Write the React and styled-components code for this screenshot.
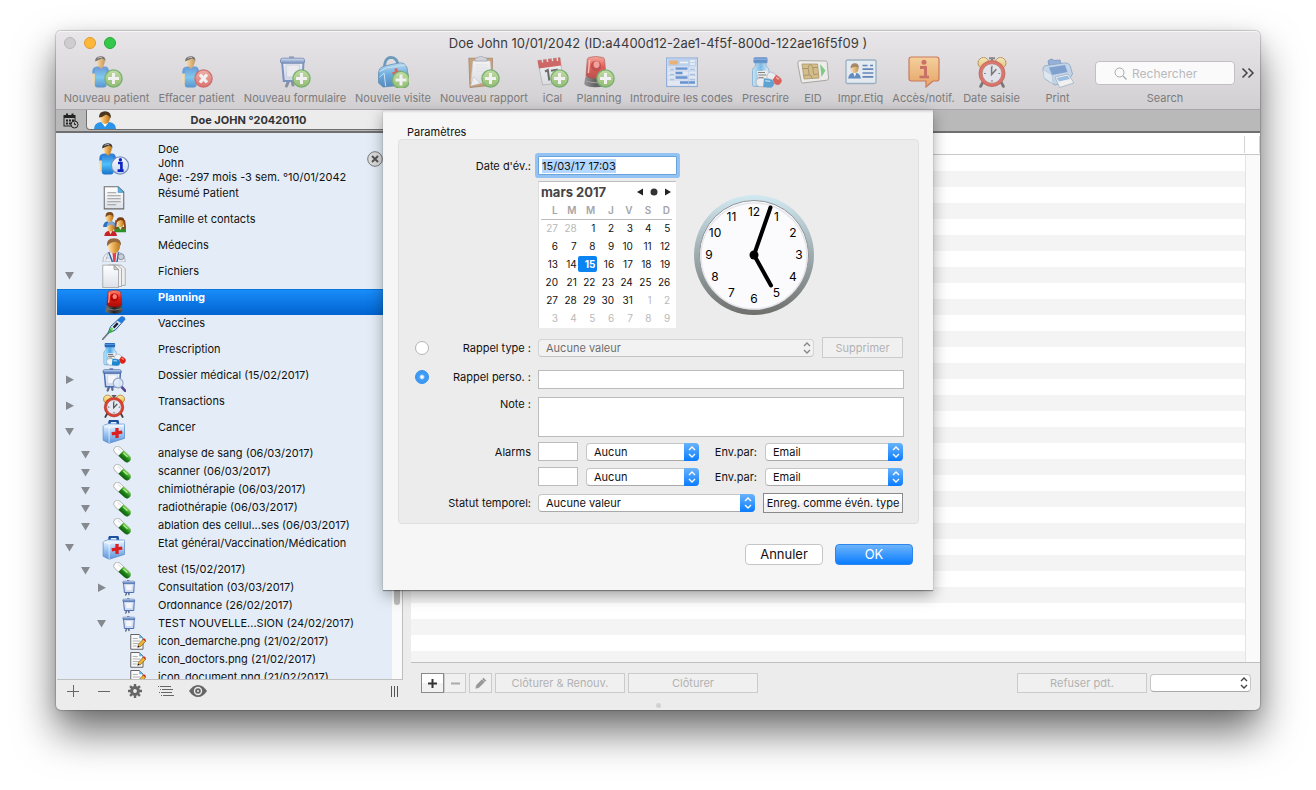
import React, { useEffect, useRef } from 'react';
import styled, { createGlobalStyle, css } from 'styled-components';

const GlobalStyle = createGlobalStyle`
  *, *::before, *::after { box-sizing: border-box; }
  body { margin: 0; background: #fff; overflow: hidden; }
  body, button, input, select, textarea { font-family: Inter, "Liberation Sans", sans-serif; font-size: 11px; color: #111; }
  button, input, select, textarea { margin: 0; padding: 0; border-radius: 0; outline: none; }
  button { background: none; border: 0; }
  ul { list-style: none; margin: 0; padding: 0; }
  svg { display: block; flex: none; }
`;

/* ---------- icon artwork ---------- */

const Defs = styled.svg`position: absolute; width: 0; height: 0;`;

function lin(id, stops, horizontal) {
  return (
    <linearGradient key={id} id={id} x1="0" y1="0" x2={horizontal ? 1 : 0} y2={horizontal ? 0 : 1}>
      {stops.map((c, i) => <stop key={i} offset={i / (stops.length - 1)} stopColor={c} />)}
    </linearGradient>
  );
}

const Gradients = () => (
  <Defs aria-hidden="true">
    <defs>
      {lin('shirt', ['#2f7ad6', '#4fc0fa', '#1671c9'])}
      {lin('skin', ['#ffe3b0', '#e8a94e', '#b8761f'], true)}
      {lin('frame', ['#dfe9fa', '#7f9fd2', '#4a6cae'])}
      {lin('paper', ['#ffffff', '#dde1e8'])}
      {lin('red', ['#ff8a78', '#e01b10', '#a50d08'])}
      {lin('dark', ['#777', '#222', '#555'], true)}
      {lin('blue', ['#a8dcfb', '#2f93e0', '#1560ae'])}
      {lin('glass', ['#c7ecff', '#4aa8e8', '#e8f7ff'], true)}
      {lin('kit', ['#f4faff', '#9fc6f2', '#5b93da'])}
      {lin('orange', ['#ffc878', '#ef8a2c'])}
      {lin('gold', ['#fff0b0', '#e2b23e'])}
      {lin('green', ['#7fd053', '#1f8a1a', '#0c5c0c'])}
      {lin('rim', ['#d2e9f1', '#9eabaf', '#6f6f6c'])}
      {lin('add', ['#b6dd88', '#6fae3c'])}
      {lin('del', ['#f59a8e', '#dd3f38'])}
      {lin('board', ['#fafcff', '#c9d6ec'])}
    </defs>
  </Defs>
);

const Svg = ({ size = 32, box = 32, children }) => (
  <svg width={size} height={size} viewBox={`0 0 ${box} ${box}`} aria-hidden="true">{children}</svg>
);

const AddBadge = ({ cx = 22.5, cy = 22.5 }) => (
  <g>
    <circle cx={cx} cy={cy} r="8.6" fill="url(#add)" stroke="#3f9a3a" strokeWidth="1.3" />
    <path d={`M${cx - 5.5} ${cy}h11M${cx} ${cy - 5.5}v11`} stroke="#fff" strokeWidth="3" />
  </g>
);
const DelBadge = () => (
  <g>
    <circle cx="22.5" cy="22.5" r="8.6" fill="url(#del)" stroke="#c83432" strokeWidth="1.3" />
    <path d="M19 18.500l7 8M26 18.500l-7 8" stroke="#fff" strokeWidth="3.4" />
  </g>
);
const InfoBadge = () => (
  <g>
    <circle cx="22" cy="22.5" r="8.6" fill="url(#board)" stroke="#7a93bd" strokeWidth="1.3" />
    <path d="M20 20h3.4v7M19.6 27.6h6" stroke="#0b22c4" strokeWidth="2.6" fill="none" />
    <circle cx="22.4" cy="16.8" r="1.7" fill="#0b22c4" />
  </g>
);

const Person = () => (
  <g>
    <path d="M1.500 14Q2 10.500 7 10.500h7Q18 10.500 18 16v4H1z" fill="#2a7fd8" />
    <path d="M1 17.500h3V29H3q-1.600 0-1.600-3zM15 17h3v10h-3z" fill="url(#skin)" />
    <path d="M4 11h11l.8 18q-1 2.500-3 2.500H6.500Q4 31.500 3.800 29z" fill="url(#shirt)" />
    <path d="M7 10.200l3 2.600 3-2.600-1-2H8z" fill="#d5933f" />
    <ellipse cx="9.500" cy="5.600" rx="4.300" ry="5.200" fill="url(#skin)" />
    <path d="M4.200 5.500Q3.800.6 9.500.3q5.600 0 4.800 5.200-.8-2.600-3-3-3 .8-7.100 3z" fill="#3e3a36" />
    <path d="M6.500 2.400q2-1.400 4.500-.8" stroke="#bbb" strokeWidth=".9" fill="none" />
  </g>
);
const Board = () => (
  <g>
    <path d="M10 1.500h5" stroke="#6d84ad" strokeWidth="2.400" />
    <path d="M10 24l-2.500 6M13 24l1 5" stroke="#5c6a86" strokeWidth="3" strokeLinecap="round" />
    <path d="M3 5h21.500l-1 20H4.800z" fill="url(#board)" stroke="#4a6db3" strokeWidth="2" />
    <path d="M7 9h13.500l-.6 12H7.700z" fill="#f3f5fa" stroke="#b7c6e2" strokeWidth=".8" />
    <path d="M1.500 4.200q0-2 2-2h20q2 0 2 2v1.600q0 1.500-2 1.500h-20q-2 0-2-1.500z" fill="url(#frame)" stroke="#4262a4" strokeWidth=".9" />
  </g>
);
const Bag = () => (
  <g>
    <path d="M7.500 13Q7 2 14 1.400 20.500 1.600 21.500 11" fill="none" stroke="#3177a8" strokeWidth="2.600" />
    <path d="M1.500 17Q2 11 8 9.800L22 7q6-1 8 5l1.500 9-4.500 8L6 31 1.500 27z" fill="url(#blue)" stroke="#2768a5" strokeWidth=".8" />
    <path d="M2.500 15.500l7-3.500 19-3M2.600 21l4.500-4 1.500 13" fill="none" stroke="#bfe6fb" strokeWidth="1" />
    <path d="M15.500 17.600l8-1.600M18.900 12.500l1.300 7.600" stroke="#e2231a" strokeWidth="3" />
  </g>
);
const Clipboard = () => (
  <g>
    <path d="M.8 2.200h23.700l-.5 27L2 31.500z" fill="#b98350" stroke="#8b5a2b" strokeWidth=".8" />
    <path d="M5 5h17l2 19-5 3.500L3 26z" fill="url(#paper)" stroke="#c2c7d0" strokeWidth=".6" />
    <path d="M2.500 30l3-9.500 7 7z" fill="#f8f9fb" stroke="#aab" strokeWidth=".5" />
    <path d="M7 3.500q0-2 3-2 1-1.300 3-1.300t2.800 1.300q3.200 0 3.200 2V5H7z" fill="#c9ced8" stroke="#7f8794" strokeWidth=".7" />
    <path d="M7.500 9h12M7.500 12h12M7.500 15h10" stroke="#e3e6ec" strokeWidth="1" />
  </g>
);
const Calendar = () => (
  <g>
    <path d="M.8 4.500L23 1.500l3.500 25L5.500 29z" fill="url(#paper)" stroke="#9d9d9d" strokeWidth=".8" />
    <path d="M.6 4.600L23 1.400l1.200 8L2 12.500z" fill="#c62a27" />
    <path d="M5 1.500l.6 5M10 .8l.6 5M15 .2l.6 5M20 0l.5 5" stroke="#dedede" strokeWidth="1.500" />
    <path d="M8 15.500l2.800-1.500 1.500 10.500M14 14.800l5.500-1-3 9.500" stroke="#333" strokeWidth="2" fill="none" />
  </g>
);
const Siren = () => (
  <g>
    <path d="M2.500 20.500h20.500l1 7q-1 3.800-11.500 3.800T1.200 27.500z" fill="url(#dark)" />
    <path d="M3.200 25q9.500 3.500 19.600 0" stroke="#8a8a8a" strokeWidth="1" fill="none" />
    <path d="M5.800 1.500Q12.600-.6 20 1.500q1.500.6 1.600 2.500l1.400 16q-4 2.500-10 2.500t-10-2.500L4.200 4q.2-2 1.600-2.500z" fill="url(#red)" stroke="#8c0f0a" strokeWidth=".6" />
    <circle cx="13" cy="10" r="5.200" fill="#b10a07" />
    <ellipse cx="13.500" cy="8.600" rx="3" ry="3.400" fill="#ff8276" />
    <path d="M6.600 4l-1.200 13" stroke="#ffb0a5" strokeWidth="1.500" />
  </g>
);
const CenteredSiren = () => <g transform="translate(3.500 0)"><Siren /></g>;
const Grid = () => (
  <g>
    <rect x=".6" y="2" width="30.800" height="28.500" fill="#e6f0fd" stroke="#6e9ad8" strokeWidth="1.200" />
    <rect x="1.500" y="3" width="29" height="7" fill="#a9cbf6" />
    <rect x="3.500" y="4.500" width="8.500" height="4" fill="#f09a3a" />
    <path d="M14 6.500h8M24 5h5M24 8h5" stroke="#fff" strokeWidth="1.600" />
    <path d="M4 13.500h4M4 18.500h4M4 23.500h4M24 13.500h5M24 18.500h5M24 23.500h5" stroke="#8eb4ea" strokeWidth="1.600" />
    <path d="M9.500 12.500h12M9.500 17h7M9.500 21.500h12M14 26.500h15" stroke="#2d70cc" strokeWidth="2.400" />
    <path d="M2 11h28M2 15h28M2 19.500h28M2 24h28M22.700 3v27" stroke="#a6c5ee" strokeWidth=".7" />
  </g>
);
const Bottle = () => (
  <g>
    <rect x="3.500" y="1.200" width="14" height="6" rx="1.500" fill="#2468bd" />
    <path d="M4 3.200h13" stroke="#6aa8ea" strokeWidth="1" />
    <path d="M5.500 7h10.500v3q3 2 3 4.500V29q0 1.500-2 1.500H4.500q-2 0-2-1.500V14.500Q2.500 12 5.500 10z" fill="url(#glass)" stroke="#3c8ccc" strokeWidth=".7" />
    <path d="M7 15l10-.5 2.500 8L8 23z" fill="#f4f6f8" />
    <path d="M8 16.500h7M8.300 19h8M8.500 21.500h5" stroke="#555" strokeWidth="1.200" />
    <g transform="rotate(35 25 23)">
      <rect x="16" y="19" width="16" height="8" rx="4" fill="#f3f6f9" stroke="#98a3af" strokeWidth=".7" />
      <path d="M23.500 19h4.500a4 4 0 010 8h-4.500z" fill="#dd2318" />
      <path d="M25 21h3.500" stroke="#ff9d92" strokeWidth="1.300" />
    </g>
    <g transform="rotate(6 14 27)">
      <rect x="6" y="22.500" width="18" height="8.500" rx="4.200" fill="#f3f6f9" stroke="#98a3af" strokeWidth=".7" />
      <path d="M13.500 22.500h6.300a4.200 4.200 0 010 8.500h-6.300z" fill="#1d86cf" />
      <path d="M15 24.700h5" stroke="#a8dcfb" strokeWidth="1.400" />
    </g>
  </g>
);
const ChipCard = () => (
  <g>
    <path d="M1 6.500q0-2 2-1.900L28.500 5q1.500 0 1.700 1.600L31.500 22q.2 2-1.600 2.200L6 27q-1.600.2-1.800-1.500L.8 8z" fill="#f7f6f2" stroke="#8c8c84" strokeWidth="1" />
    <path d="M5 8h15.500l1.500 14L7 23z" fill="#d0ae5c" stroke="#8e7431" strokeWidth=".8" />
    <path d="M5.500 12.500h5.700l1 6.500-5.700.4M20.800 11.500h-5l.9 7 5-.5M11.200 12.500Q11 9 13.500 8.200M12.200 19q2.500 0 3 3.500M15.800 11.500l-2.300-3.300" fill="none" stroke="#7b6429" strokeWidth=".8" />
    <path d="M23 8l5.500 6.500L24.500 21z" fill="#4fc05a" />
  </g>
);
const IdCard = () => (
  <g>
    <rect x="1" y="4" width="30" height="23.500" rx="1.500" fill="#e7f3fb" stroke="#7899b4" strokeWidth="1.300" />
    <path d="M3 22.500Q4 16.500 9.500 16.500t6.500 6z" fill="#2263b5" />
    <path d="M8 16.500h3.500l-1.700 4.500z" fill="#fff" />
    <ellipse cx="9.600" cy="12.500" rx="3.900" ry="4.600" fill="url(#skin)" />
    <path d="M5.500 12.500q0-5.300 4.500-5.300 4 0 3.800 4.600-4.300-2.400-8.300.7z" fill="#8a5a28" />
    <path d="M17.500 9.500h5M25 9.500h3M17.500 13.200h10.800M17.500 17h10.800M17.500 20.800h10.800" stroke="#2358a8" strokeWidth="1.700" />
  </g>
);
const Notice = () => (
  <g>
    <path d="M3.500 1h25Q31 1 31 3.500v19q0 2.500-2.500 2.500H25l-7 6v-6H3.500Q1 25 1 22.500v-19Q1 1 3.500 1z" fill="url(#orange)" stroke="#c4461b" strokeWidth="1.200" />
    <circle cx="16" cy="6.300" r="2.500" fill="#bf3a28" />
    <path d="M12 11.500h5.500V21" fill="none" stroke="#bf3a28" strokeWidth="3" />
    <path d="M11.500 21h9.500" stroke="#bf3a28" strokeWidth="2.600" />
  </g>
);
const Alarm = () => (
  <g>
    <circle cx="7.500" cy="7" r="5.500" fill="url(#gold)" stroke="#a8741b" />
    <circle cx="24.500" cy="7" r="5.500" fill="url(#gold)" stroke="#a8741b" />
    <path d="M13 2.200h6M16 2v3" stroke="#555" strokeWidth="2" />
    <path d="M7 26l-2.500 4.500M25 26l2.500 4.500" stroke="#444" strokeWidth="2.600" strokeLinecap="round" />
    <circle cx="16" cy="17.500" r="13" fill="#e0402e" stroke="#9b1c12" strokeWidth=".7" />
    <circle cx="16" cy="17.500" r="9.800" fill="#e5e9f3" stroke="#a34a42" strokeWidth=".8" />
    <path d="M16 9.500v1.800M16 24v1.800M8 17.500h1.800M22.400 17.500h1.800" stroke="#555" strokeWidth="1.200" />
    <path d="M15.600 11v7.500l4.800-5.300" stroke="#444" strokeWidth="1.500" fill="none" />
  </g>
);
const Printer = () => (
  <g>
    <path d="M6 5q3.500-3.500 6-.5l6-.5 2.500 8.500L8 14z" fill="#6d9ad6" stroke="#3c669e" strokeWidth=".7" />
    <path d="M1 14.500Q.5 9.500 4.500 9.500l18-2.500q5-.5 6 4l2 7-4.500 7-13 4-10-6z" fill="#b7d2ee" stroke="#5985b6" strokeWidth=".8" />
    <path d="M7 11.500l16-2.500 2.500 7L10 19z" fill="#4e83c8" />
    <path d="M1 13.500l9 5.500 1 9-9-6z" fill="#e1eef9" stroke="#8fb0d0" strokeWidth=".5" />
    <path d="M13 21l13-3 6 9-14.500 4.500z" fill="#fdfeff" stroke="#7f9dbd" strokeWidth=".8" />
    <path d="M14.500 22l11-2.600 2.500 3.600-11 2.600z" fill="#7bb1e8" />
  </g>
);
const Sheet = () => (
  <g>
    <path d="M3 1h18.500L29 8v22.500H3z" fill="url(#paper)" stroke="#6b6b6b" strokeWidth="1.400" />
    <path d="M21.500 1v7.500H29z" fill="#5bb4e8" stroke="#3a7fb0" strokeWidth=".8" />
    <path d="M7 9h12M7 13h18M7 17h18M7 21h18M7 25h12" stroke="#999" strokeWidth="1.500" />
  </g>
);
const Bust = ({ x, y, s = 1, hair = '#7c4a1c', coat = '#2b6fc0' }) => (
  <g transform={`translate(${x} ${y}) scale(${s})`}>
    <path d="M0 20Q0 12 8.500 12T17 20z" fill={coat} />
    <path d="M6 12h5l-2.500 5z" fill="#f2dcc0" />
    <ellipse cx="8.500" cy="7" rx="5" ry="6" fill="url(#skin)" />
    <path d="M3.300 7Q2.500 0 8.800 0q6 0 5 7-1.500-3.500-4.500-3.500-3.500 0-6 3.500z" fill={hair} />
  </g>
);
const Family = () => (
  <g>
    <Bust x={1.5} y={0} />
    <Bust x={16} y={7} hair="#7a3d12" coat="#2e8f2b" />
    <path d="M19 11l-1.500 11 4-1M29.500 11l1.500 10-4 1" fill="none" stroke="#8e4a18" strokeWidth="2.500" />
    <Bust x={3} y={13} hair="#86a5cf" coat="#c8212a" />
  </g>
);
const Doctor = () => (
  <g>
    <path d="M1 32Q1 18 16 18t15 14z" fill="#eceff4" stroke="#9ba4b2" strokeWidth=".9" />
    <path d="M9 19l5 13M22 19l-2 13" stroke="#3166ae" strokeWidth="2" />
    <path d="M14 20h5l-1 12h-3z" fill="#e2404a" />
    <ellipse cx="16" cy="11" rx="8" ry="9.500" fill="url(#skin)" />
    <path d="M7 11Q5 .3 16 .3q10.500 0 9 10.200Q23 5.500 17.500 5 11 5.500 7 11z" fill="#96683b" />
    <circle cx="25.500" cy="25" r="4" fill="#c8ced7" stroke="#727b88" />
    <path d="M5 26l5 1M8 21l-3 9" stroke="#a9b1bd" />
  </g>
);
const Files = () => (
  <g stroke="#8f8f8f" strokeWidth=".9">
    <path d="M13 1.500h13l5 5v22H13z" fill="#ededed" />
    <path d="M8 1.500h13l5 5v23.500H8z" fill="#f1f1f1" />
    <path d="M1 1.500h15l6 6V31.500H1z" fill="url(#paper)" />
    <path d="M16 1.500v6h6z" fill="#cfcfcf" />
  </g>
);
const Thermometer = () => (
  <g>
    <path d="M1 31l9-10" stroke="#6e7682" strokeWidth="2.400" strokeLinecap="round" />
    <path d="M8 23l3.500-9L25 1.500q5-1.500 5.500 3L18 18.500z" fill="#d8eaf7" stroke="#1c5796" strokeWidth="1.300" />
    <path d="M20 6l5-4.500q5-1.500 5.500 3l-4.500 5z" fill="#1d7be0" />
    <path d="M10.500 16.500l5 4.500-7.500 2z" fill="#3eb23c" />
    <path d="M15.500 15.500l5.500-6" stroke="#223" strokeWidth="3" />
    <path d="M12 18l2-2" stroke="#64e052" strokeWidth="3" />
  </g>
);
const BoardSearch = () => (
  <g>
    <Board />
    <path d="M26 25l5 5.500" stroke="#5a4793" strokeWidth="3.600" strokeLinecap="round" />
    <circle cx="21.500" cy="20" r="6.500" fill="#e0ecfb" fillOpacity=".9" stroke="#91a4c4" strokeWidth="1.500" />
  </g>
);
const MedKit = () => (
  <g>
    <path d="M10 7V3q0-2 2-2h7q2 0 2 2v3" fill="none" stroke="#1d50a0" strokeWidth="3.400" />
    <path d="M1.500 7.500L8 5l22 .5v19L9.500 31 1.500 27z" fill="url(#kit)" stroke="#5a8dcc" strokeWidth="1" />
    <path d="M9.500 10l20.500-3.500M9.500 10v21M9.500 10L1.500 7.500" stroke="#fff" strokeWidth=".9" fill="none" />
    <path d="M13 18.500l14-2.500M20 10.500v13.500" stroke="#dc1f1f" strokeWidth="4.400" />
  </g>
);
const Pill = () => (
  <g transform="rotate(42 16 15)">
    <rect x="-2" y="8" width="36" height="13" rx="6.500" fill="#fdfdfd" stroke="#8b8b8b" />
    <path d="M13 8h14.500a6.500 6.500 0 010 13H13z" fill="url(#green)" />
    <path d="M3 12h8" stroke="#cfcfcf" strokeWidth="1.400" /><path d="M16 11.500h10" stroke="#b8ef95" strokeWidth="2" />
  </g>
);
const EditSheet = () => (
  <g>
    <path d="M1.500 1h17L26 8v22.500H1.500z" fill="#fafafa" stroke="#555" strokeWidth="1.800" />
    <path d="M18.500 1v7.500H26z" fill="#5bb4e8" />
    <path d="M5.500 9h10M5.500 14h15M5.500 19h12M5.500 24h8" stroke="#aaa" strokeWidth="1.800" />
    <path d="M15.500 26.500l1.500-6L26.500 10l5 4.500-10 10.500z" fill="#efb32f" stroke="#4f3510" strokeWidth="1" />
    <path d="M26 10.500l2.200-2 4 3.500-2 2.500z" fill="#d52a20" />
    <path d="M15 27l1.500-3.500 2.500 2z" fill="#000" />
  </g>
);

/* ---------- window chrome ---------- */

const Page = styled.div`
  display: grid;
  height: 100vh;
  padding: 31px 56px 80px;
`;
const Window = styled.main`
  position: relative;
  display: flex;
  flex-direction: column;
  min-height: 0;
  border-radius: 5px;
  background: #ececec;
  box-shadow: 0 0 1px 1px rgba(0, 0, 0, 0.18), 0 22px 40px rgba(0, 0, 0, 0.56), 0 4px 16px rgba(0, 0, 0, 0.1);
`;
const Header = styled.header`
  height: 79px;
  flex: none;
  border-radius: 5px 5px 0 0;
  border-top: 1px solid #f6f5f6;
  border-bottom: 1px solid #a9a7a9;
  background: linear-gradient(#e8e6e8, #d1cfd1);
`;
const TitleRow = styled.div`
  display: grid;
  grid-template-columns: 1fr auto 1fr;
  align-items: center;
  height: 22px;
  padding: 0 8px;
`;
const Lights = styled.div`display: flex; gap: 8px;`;
const Light = styled.button`
  width: 12px;
  height: 12px;
  border-radius: 50%;
  border: 1px solid ${(p) => p.$edge};
  background: ${(p) => p.$fill};
`;
const WindowTitle = styled.h1`
  margin: 0;
  font-size: 13px;
  font-weight: 400;
  color: #3a3a3c;
`;
const Toolbar = styled.nav`
  display: flex;
  gap: 9px;
  padding: 2px 0 0 8px;
`;
const Tool = styled.button`
  display: flex;
  flex-direction: column;
  align-items: center;
  gap: 2px;
  width: ${(p) => p.$width}px;
  flex: none;
  color: #7c7b7d;
  white-space: nowrap;
  svg { opacity: 0.65; }
  span { line-height: 16px; }
`;
const SearchTool = styled.label`
  display: flex;
  flex-direction: column;
  align-items: center;
  width: 140px;
  color: #7c7b7d;
  span { line-height: 16px; }
`;
const SearchBox = styled.div`
  position: relative;
  height: 34px;
  width: 100%;
  padding-top: 5px;
  > svg { position: absolute; left: 19px; top: 11px; }
`;
const SearchInput = styled.input`
  width: 100%;
  height: 24px;
  padding-left: 36px;
  border: 1px solid #c2c0c2;
  border-radius: 4px;
  background: #fafafa;
  font-size: 12px;
  &::placeholder { color: #b9b9bb; opacity: 1; }
`;
const More = styled.button`
  margin-left: -3px;
  height: 34px;
`;

const TabBar = styled.div`
  display: flex;
  flex: none;
  height: 23px;
  background: #b9b9b9;
  border-bottom: 2px solid #6f6f6f;
`;
const TabIcon = styled.button`
  display: grid;
  place-items: center;
  width: 30px;
`;
const PatientTab = styled.button`
  display: grid;
  grid-template-columns: 40px 1fr 40px;
  align-items: center;
  width: 325px;
  height: 20px;
  border: solid #6f6f6f;
  border-width: 0 1px 1px;
  border-radius: 0 0 4px 4px;
  background: #ececec;
  font-weight: 700;
  color: #333;
  svg { margin-left: 6px; }
`;

const Body = styled.div`
  display: grid;
  grid-template-columns: 347px 1fr;
  column-gap: 8px;
  flex: 1;
  min-height: 0;
`;

/* ---------- sidebar ---------- */

const Sidebar = styled.aside`
  display: flex;
  flex-direction: column;
  min-height: 0;
`;
const TreeArea = styled.div`
  display: flex;
  flex: 1;
  min-height: 0;
  margin-left: 1px;
  border-right: 1px solid #bfbfbf;
  border-bottom: 1px solid #bfbfbf;
  overflow: hidden;
`;
const Tree = styled.ul`
  flex: 1;
  padding-top: 9px;
  background: #e4edf7;
`;
const ScrollTrack = styled.div`
  display: flex;
  flex-direction: column;
  width: 10px;
  padding: 8px 2px 0;
  background: #fafafa;
`;
const ScrollThumb = styled.div`
  height: 464px;
  border-radius: 3px;
  background: #bdbdbd;
`;
const TreeRow = styled.li`
  display: grid;
  grid-template-columns: 41px 60px 1fr auto;
  height: ${(p) => p.$height}px;
  white-space: nowrap;
  ${(p) => p.$active && css`
    background: linear-gradient(#1a8efb, #0063cf);
    box-shadow: inset 0 1px #0a74da;
    color: #fff;
    font-weight: 700;
  `}
`;
const Disclosure = styled.button`
  display: flex;
  align-items: center;
  height: 100%;
  padding-left: ${(p) => 8 + p.$level * 16}px;
`;
const TreeIcon = styled.div`
  padding: 1px 0 0 ${(p) => p.$inset}px;
`;
const TreeLabel = styled.span`
  line-height: ${(p) => p.$line || 16}px;
  white-space: pre-line;
`;
const CloseButton = styled.button`
  align-self: start;
  margin: 9px 9px 0 0;
`;
const SidebarFooter = styled.div`
  display: flex;
  align-items: center;
  gap: 16px;
  height: 30px;
  flex: none;
  padding: 0 1px 8px 9px;
`;
const FootButton = styled.button`
  display: grid;
  place-items: center;
  width: 15px;
  &:last-child { margin-left: auto; }
`;

const ICON_INSET = [4, 15, 24, 32];
const ICON_SIZE = [24, 18, 16, 16];

const rows = [
  { label: 'Résumé Patient', icon: Sheet },
  { label: 'Famille et contacts', icon: Family },
  { label: 'Médecins', icon: Doctor },
  { label: 'Fichiers', icon: Files, open: true },
  { label: 'Planning', icon: CenteredSiren, active: true },
  { label: 'Vaccines', icon: Thermometer },
  { label: 'Prescription', icon: Bottle },
  { label: 'Dossier médical (15/02/2017)', icon: BoardSearch, open: false },
  { label: 'Transactions', icon: Alarm, open: false },
  { label: 'Cancer', icon: MedKit, open: true },
  { label: 'analyse de sang (06/03/2017)', icon: Pill, level: 1, open: true },
  { label: 'scanner (06/03/2017)', icon: Pill, level: 1, open: true },
  { label: 'chimiothérapie (06/03/2017)', icon: Pill, level: 1, open: true },
  { label: 'radiothérapie (06/03/2017)', icon: Pill, level: 1, open: true },
  { label: 'ablation des cellul...ses (06/03/2017)', icon: Pill, level: 1, open: true },
  { label: 'Etat général/Vaccination/Médication', icon: MedKit, open: true },
  { label: 'test (15/02/2017)', icon: Pill, level: 1, open: true },
  { label: 'Consultation (03/03/2017)', icon: Board, level: 2, open: false },
  { label: 'Ordonnance (26/02/2017)', icon: Board, level: 2 },
  { label: 'TEST NOUVELLE...SION (24/02/2017)', icon: Board, level: 2, open: true },
  { label: 'icon_demarche.png (21/02/2017)', icon: EditSheet, level: 3 },
  { label: 'icon_doctors.png (21/02/2017)', icon: EditSheet, level: 3 },
  { label: 'icon_document.png (21/02/2017)', icon: EditSheet, level: 3 },
];

const Triangle = ({ open }) => (
  <Svg size={10} box={10}>
    <path d={open ? 'M0 1h9L4.500 8.500z' : 'M1 .5v8.500L9 4.800z'} fill="#868a8f" />
  </Svg>
);

function PatientTree() {
  return (
    <Sidebar>
      <TreeArea>
        <Tree>
          <TreeRow $height={43}>
            <span />
            <TreeIcon $inset={0}><Svg><Person /><InfoBadge /></Svg></TreeIcon>
            <TreeLabel $line={14}>{'Doe\nJohn\nAge: -297 mois -3 sem. °10/01/2042'}</TreeLabel>
            <CloseButton aria-label="Fermer">
              <Svg size={16} box={16}>
                <circle cx="8" cy="8" r="7.300" fill="#dcdcdc" stroke="#777" />
                <path d="M5 5l6 6M11 5l-6 6" stroke="#555" strokeWidth="2" />
              </Svg>
            </CloseButton>
          </TreeRow>
          {rows.map(({ label, icon: Art, level = 0, open, active }) => (
            <TreeRow key={label} $height={level ? 18 : 26} $active={active}>
              {open === undefined ? <span /> : (
                <Disclosure $level={level} aria-expanded={open} aria-label={label}><Triangle open={open} /></Disclosure>
              )}
              <TreeIcon $inset={ICON_INSET[level]}><Svg size={ICON_SIZE[level]}><Art /></Svg></TreeIcon>
              <TreeLabel>{label}</TreeLabel>
            </TreeRow>
          ))}
        </Tree>
        <ScrollTrack><ScrollThumb /></ScrollTrack>
      </TreeArea>
      <SidebarFooter>
        <FootButton aria-label="Ajouter"><Svg size={14} box={14}><path d="M1 7.500h12M7.500 1v12" stroke="#666" /></Svg></FootButton>
        <FootButton aria-label="Supprimer"><Svg size={14} box={14}><path d="M1 7.500h12" stroke="#666" /></Svg></FootButton>
        <FootButton aria-label="Réglages">
          <Svg size={14} box={14}>
            <circle cx="7" cy="7" r="3.400" fill="none" stroke="#666" strokeWidth="3" />
            {[0, 45, 90, 135].map((a) => <path key={a} d="M7 0v3M7 11v3" stroke="#666" strokeWidth="2.400" transform={`rotate(${a} 7 7)`} />)}
          </Svg>
        </FootButton>
        <FootButton aria-label="Liste">
          <Svg size={16} box={16}><path d="M2 3.500h11M4 6.500h11M3 9.500h11M5 12.500h11" stroke="#666" /><path d="M0 3.500h1M2 6.500h1M1 9.500h1M3 12.500h1" stroke="#666" /></Svg>
        </FootButton>
        <FootButton aria-label="Afficher">
          <svg width="18" height="12" viewBox="0 0 18 12" aria-hidden="true">
            <path d="M0 6Q4 0 9 0t9 6q-4 6-9 6T0 6z" fill="#666" />
            <circle cx="9" cy="6" r="4.200" fill="#ececec" /><circle cx="9" cy="6" r="2.800" fill="#666" /><circle cx="9" cy="6" r="1" fill="#ececec" />
          </svg>
        </FootButton>
        <FootButton aria-label="Redimensionner"><Svg size={12} box={12}><path d="M2.500 1v11M5.500 1v11M8.500 1v11" stroke="#555" /></Svg></FootButton>
      </SidebarFooter>
    </Sidebar>
  );
}

/* ---------- event list ---------- */

const Content = styled.section`
  display: flex;
  flex-direction: column;
  min-width: 0;
  padding-bottom: 7px;
`;
const ListHead = styled.div`
  display: flex;
  justify-content: flex-end;
  height: 22px;
  flex: none;
  padding: 3px 0 1px;
  background: #fff;
  border-bottom: 1px solid #c8c8c8;
  &::after { content: ''; width: 16px; border-left: 1px solid #d4d4d4; border-right: 1px solid #d4d4d4; }
`;
const Stripes = styled.div`
  flex: 1;
  display: flex;
  justify-content: flex-end;
  border-bottom: 1px solid #bfbfbf;
  background: repeating-linear-gradient(#fff 0 16px, #f4f4f4 16px 32px);
  &::after { content: ''; width: 15px; background: #fafafa; border-left: 1px solid #e4e4e4; }
`;
const ActionBar = styled.div`
  display: flex;
  align-items: center;
  gap: 3px;
  height: 40px;
  flex: none;
  padding: 0 9px 0 10px;
`;
const ButtonPair = styled.div`display: flex;`;
const FlatButton = styled.button`
  display: grid;
  place-items: center;
  width: ${(p) => p.$width}px;
  height: ${(p) => p.$height || 20}px;
  border: 1px solid ${(p) => (p.$strong ? '#8a8a8a' : '#cbcbcb')};
  background: ${(p) => (p.$strong ? 'linear-gradient(#fff 50%, #f2f2f2 50%)' : '#f0f0f0')};
  color: ${(p) => (p.$strong ? '#111' : '#b2b2b2')};
  white-space: nowrap;
`;
const Spacer = styled.div`flex: 1;`;
const ResizeDot = styled.div`
  align-self: center;
  position: absolute;
  bottom: 2px;
  width: 5px;
  height: 5px;
  border-radius: 50%;
  background: #d2d2d2;
`;

/* ---------- form controls ---------- */

const SelectShell = styled.span`
  position: relative;
  display: flex;
  width: ${(p) => p.$width}px;
  height: 18px;
  opacity: ${(p) => (p.$faded ? 0.6 : 1)};
  select {
    appearance: none;
    width: 100%;
    padding-left: 7px;
    border: 1px solid #c6c6c6;
    border-bottom-color: #a9a9a9;
    border-radius: 4px;
    background: ${(p) => (p.$faded ? '#f6f6f6' : '#fff')};
    opacity: 1;
    color: #111;
  }
`;
const SelectArrows = styled.span`
  position: absolute;
  inset: 0 0 0 auto;
  display: grid;
  place-items: center;
  width: 15px;
  border-radius: 0 4px 4px 0;
  pointer-events: none;
  background: ${(p) => (p.$plain ? 'none' : 'linear-gradient(#69b3fb, #0a7cff)')};
`;

function Select({ width, label, value = '', plain, faded, id }) {
  return (
    <SelectShell $width={width} $faded={faded}>
      <select id={id} aria-label={label} defaultValue={value} disabled={faded}><option>{value}</option></select>
      <SelectArrows $plain={plain || faded}>
        <svg width="8" height="12" viewBox="0 0 8 12" aria-hidden="true">
          <path d="M1 4l3-3 3 3M1 8l3 3 3-3" fill="none" stroke={plain || faded ? '#444' : '#fff'} strokeWidth="1.400" />
        </svg>
      </SelectArrows>
    </SelectShell>
  );
}

/* ---------- dialog ---------- */

const DialogLayer = styled.div`
  position: absolute;
  inset: 79px 0 auto;
  display: flex;
  justify-content: center;
`;
const Dialog = styled.form`
  width: 550px;
  padding: 15px 14px 25px 15px;
  background: #f6f6f6;
  box-shadow: 0 1px 1px rgba(0, 0, 0, 0.35), 0 5px 14px rgba(0, 0, 0, 0.35), inset 0 3px 3px -2px rgba(0, 0, 0, 0.2);
`;
const Group = styled.fieldset`
  margin: 0;
  padding: 0;
  border: 0;
`;
const GroupTitle = styled.legend`
  padding: 0 9px;
  line-height: 14px;
`;
const GroupBox = styled.div`
  display: flex;
  flex-direction: column;
  padding: 16px 14px 10px 16px;
  border: 1px solid #e0e0e0;
  border-radius: 4px;
  background: #ececec;
`;
const FieldRow = styled.div`
  display: grid;
  grid-template-columns: 14px 102px 1fr;
  align-items: ${(p) => p.$align || 'center'};
  min-height: ${(p) => p.$height}px;
  margin-top: ${(p) => p.$top || 0}px;
`;
const FieldLabel = styled.label`
  grid-column: 2;
  line-height: 14px;
  text-align: right;
`;
const Controls = styled.div`
  display: flex;
  align-items: center;
  gap: 8px;
  grid-column: 3;
  padding-left: 7px;
`;
const Radio = styled.input`
  appearance: none;
  grid-column: 1;
  width: 14px;
  height: 14px;
  border: 1px solid #b4b4b4;
  border-radius: 50%;
  background: #fff;
  &:checked { border-color: #2f8fee; background: radial-gradient(circle, #fff 0 1px, #3d9bf6 3px); }
`;
const TextInput = styled.input`
  width: ${(p) => (p.$width ? `${p.$width}px` : '100%')};
  height: 19px;
  border: 1px solid #bcbcbc;
  background: #fff;
`;
const DateInput = styled(TextInput)`
  padding: 0 3px;
  border-color: #6ba4dc;
  border-radius: 1px;
  box-shadow: 0 0 0 3px #92c3f2;
  &::selection { background: #b3d7fe; color: #111; }
`;
const NoteInput = styled.textarea`
  width: 100%;
  height: 40px;
  border: 1px solid #bcbcbc;
  background: #fff;
  resize: none;
`;
const SendLabel = styled.label`
  width: 50px;
  line-height: 14px;
  text-align: right;
`;

const Pickers = styled.div`
  display: flex;
  gap: 18px;
  margin: 6px 0 0 123px;
`;
const MonthPicker = styled.div`
  width: 138px;
  height: 147px;
  padding: 1px 4px 0 2px;
  border-top: 1px solid #bdbdbd;
  border-left: 1px solid #ddd;
  background: #fff;
`;
const MonthBar = styled.div`
  display: flex;
  align-items: center;
  justify-content: space-between;
  height: 18px;
  color: #444;
  strong { font-size: 13px; font-weight: 700; }
`;
const MonthNav = styled.div`
  display: flex;
  gap: 6px;
  button { width: 8px; }
`;
const MonthTable = styled.table`
  width: 100%;
  table-layout: fixed;
  border-collapse: collapse;
  font-size: 10px;
  text-align: right;
  th {
    height: 18px;
    padding: 1px 2px 0 0;
    border-bottom: 1px solid #bdbdbd;
    color: #a5a5a8;
    font-weight: 600;
  }
  td { height: 18px; padding: 0; }
`;
const Day = styled.button`
  width: 19px;
  height: 16px;
  padding-right: 2px;
  border-radius: 2px;
  font-size: 10px;
  text-align: right;
  white-space: nowrap;
  color: ${(p) => (p.$picked ? '#fff' : p.$outside ? '#b9b9b9' : '#111')};
  font-weight: ${(p) => (p.$picked ? 700 : 400)};
  background: ${(p) => (p.$picked ? '#0a84f2' : 'none')};
`;
const ClockBox = styled.div`padding-top: 14px;`;

const weeks = [
  [27, 28, 1, 2, 3, 4, 5],
  [6, 7, 8, 9, 10, 11, 12],
  [13, 14, 15, 16, 17, 18, 19],
  [20, 21, 22, 23, 24, 25, 26],
  [27, 28, 29, 30, 31, 1, 2],
  [3, 4, 5, 6, 7, 8, 9],
];
const isOutside = (week, day) => (week === 0 && day > 20) || (week > 3 && day < 10);

const Clock = () => (
  <svg width="120" height="120" viewBox="0 0 120 120" role="img" aria-label="17:03">
    <circle cx="60" cy="60" r="60" fill="url(#rim)" />
    <circle cx="60" cy="60" r="54.500" fill="#fbfbfe" stroke="#8b9498" strokeWidth="1" />
    <circle cx="60" cy="61" r="53" fill="none" stroke="#e6e6ea" strokeWidth="1.500" />
    {Array.from({ length: 12 }, (_, i) => {
      const a = ((i + 1) * Math.PI) / 6;
      return (
        <text key={i} x={60 + 45 * Math.sin(a)} y={64 - 43.5 * Math.cos(a)} textAnchor="middle" fontSize="12" fill="#000">{i + 1}</text>
      );
    })}
    <path d="M60 60L76.500 12.500M60 60L77 90.500" stroke="#000" strokeWidth="4" strokeLinecap="round" />
    <circle cx="60" cy="60" r="4.500" fill="#000" />
  </svg>
);

const DialogButtons = styled.div`
  display: flex;
  justify-content: flex-end;
  gap: 12px;
  padding: 20px 6px 0 0;
`;
const PushButton = styled.button`
  width: 78px;
  height: 21px;
  border-radius: 4px;
  font-size: 13px;
  line-height: 19px;
  border: 1px solid ${(p) => (p.$primary ? '#2c86ee' : '#c5c5c5')};
  background: ${(p) => (p.$primary ? 'linear-gradient(#6cb4fb, #0a7dff)' : '#fff')};
  color: ${(p) => (p.$primary ? '#fff' : '#111')};
`;

function EventDialog() {
  const dateRef = useRef(null);
  useEffect(() => { dateRef.current.focus(); dateRef.current.select(); }, []);
  return (
    <DialogLayer>
      <Dialog onSubmit={(e) => e.preventDefault()}>
        <Group>
          <GroupTitle>Paramètres</GroupTitle>
          <GroupBox>
            <FieldRow $height={19}>
              <FieldLabel htmlFor="date">Date d'év.:</FieldLabel>
              <Controls><DateInput id="date" ref={dateRef} $width={139} defaultValue="15/03/17 17:03" /></Controls>
            </FieldRow>
            <Pickers>
              <MonthPicker>
                <MonthBar>
                  <strong>mars 2017</strong>
                  <MonthNav>
                    <button type="button" aria-label="Mois précédent"><Svg size={8} box={8}><path d="M7 .5v7L1 4z" fill="#222" /></Svg></button>
                    <button type="button" aria-label="Aujourd'hui"><Svg size={8} box={8}><circle cx="4" cy="4" r="3.500" fill="#333" /></Svg></button>
                    <button type="button" aria-label="Mois suivant"><Svg size={8} box={8}><path d="M1 .5v7L7 4z" fill="#222" /></Svg></button>
                  </MonthNav>
                </MonthBar>
                <MonthTable>
                  <thead><tr>{['L', 'M', 'M', 'J', 'V', 'S', 'D'].map((d, i) => <th key={i}>{d}</th>)}</tr></thead>
                  <tbody>
                    {weeks.map((week, w) => (
                      <tr key={w}>
                        {week.map((day) => (
                          <td key={day}><Day type="button" $picked={day === 15} $outside={isOutside(w, day)}>{day}</Day></td>
                        ))}
                      </tr>
                    ))}
                  </tbody>
                </MonthTable>
              </MonthPicker>
              <ClockBox><Clock /></ClockBox>
            </Pickers>
            <FieldRow $height={21} $top={9}>
              <Radio type="radio" name="reminder" aria-label="Rappel type" />
              <FieldLabel htmlFor="kind">Rappel type :</FieldLabel>
              <Controls>
                <Select id="kind" width={276} value="Aucune valeur" faded />
                <FlatButton type="button" disabled $width={81} $height={21}>Supprimer</FlatButton>
              </Controls>
            </FieldRow>
            <FieldRow $height={19} $top={12} $align="start">
              <Radio type="radio" name="reminder" aria-label="Rappel perso." defaultChecked />
              <FieldLabel htmlFor="custom">Rappel perso. :</FieldLabel>
              <Controls><TextInput id="custom" /></Controls>
            </FieldRow>
            <FieldRow $height={40} $top={8} $align="start">
              <FieldLabel htmlFor="note">Note :</FieldLabel>
              <Controls><NoteInput id="note" /></Controls>
            </FieldRow>
            {[0, 1].map((n) => (
              <FieldRow key={n} $height={19} $top={n ? 6 : 5}>
                {n === 0 && <FieldLabel htmlFor="alarm0">Alarms</FieldLabel>}
                <Controls>
                  <TextInput id={`alarm${n}`} $width={40} aria-label={`Alarme ${n + 1}`} />
                  <Select width={113} value="Aucun" label="Unité" />
                  <SendLabel htmlFor={`send${n}`}>Env.par:</SendLabel>
                  <Select id={`send${n}`} width={138} value="Email" />
                </Controls>
              </FieldRow>
            ))}
            <FieldRow $height={20} $top={7}>
              <FieldLabel htmlFor="status">Statut temporel:</FieldLabel>
              <Controls>
                <Select id="status" width={217} value="Aucune valeur" />
                <FlatButton type="button" $strong $width={140}>Enreg. comme évén. type</FlatButton>
              </Controls>
            </FieldRow>
          </GroupBox>
        </Group>
        <DialogButtons>
          <PushButton type="button">Annuler</PushButton>
          <PushButton $primary>OK</PushButton>
        </DialogButtons>
      </Dialog>
    </DialogLayer>
  );
}

/* ---------- application ---------- */

const tools = [
  { label: 'Nouveau patient', width: 85, art: <><Person /><AddBadge /></> },
  { label: 'Effacer patient', width: 77, art: <><Person /><DelBadge /></> },
  { label: 'Nouveau formulaire', width: 102, art: <><Board /><AddBadge /></> },
  { label: 'Nouvelle visite', width: 76, art: <><Bag /><AddBadge cy={24} cx={24} /></> },
  { label: 'Nouveau rapport', width: 88, art: <><Clipboard /><AddBadge /></> },
  { label: 'iCal', width: 31, art: <><Calendar /><AddBadge /></> },
  { label: 'Planning', width: 44, art: <><Siren /><AddBadge /></> },
  { label: 'Introduire les codes', width: 103, art: <Grid /> },
  { label: 'Prescrire', width: 47, art: <Bottle /> },
  { label: 'EID', width: 30, art: <ChipCard /> },
  { label: 'Impr.Etiq', width: 47, art: <IdCard /> },
  { label: 'Accès/notif.', width: 61, art: <Notice /> },
  { label: 'Date saisie', width: 57, art: <Alarm /> },
  { label: 'Print', width: 57, art: <Printer /> },
];

export default function App() {
  return (
    <Page>
      <GlobalStyle />
      <Gradients />
      <Window>
        <Header>
          <TitleRow>
            <Lights>
              <Light aria-label="Fermer" $fill="#cfcdcf" $edge="#b9b7b9" />
              <Light aria-label="Réduire" $fill="#fdb83a" $edge="#e09b2a" />
              <Light aria-label="Agrandir" $fill="#34c84a" $edge="#25a838" />
            </Lights>
            <WindowTitle>Doe John 10/01/2042 (ID:a4400d12-2ae1-4f5f-800d-122ae16f5f09 )</WindowTitle>
          </TitleRow>
          <Toolbar>
            {tools.map(({ label, width, art }) => (
              <Tool key={label} $width={width}><Svg>{art}</Svg><span>{label}</span></Tool>
            ))}
            <SearchTool>
              <SearchBox>
                <Svg size={13} box={13}><circle cx="5.500" cy="5.500" r="4.500" fill="none" stroke="#a9a9ab" /><path d="M9 9l3.500 3.500" stroke="#a9a9ab" strokeWidth="1.200" /></Svg>
                <SearchInput type="search" placeholder="Rechercher" />
              </SearchBox>
              <span>Search</span>
            </SearchTool>
            <More aria-label="Plus">
              <Svg size={14} box={14}><path d="M1.500 2.500L6 7l-4.500 4.500M7.500 2.500L12 7l-4.500 4.500" fill="none" stroke="#444" strokeWidth="1.500" /></Svg>
            </More>
          </Toolbar>
        </Header>
        <TabBar>
          <TabIcon aria-label="Agenda">
            <Svg size={16} box={16}>
              <rect x="1" y="2.500" width="11" height="10.500" fill="none" stroke="#222" />
              <path d="M1 4h11M4 .5v3M9.500 .5v3" stroke="#222" strokeWidth="2" />
              <path d="M3 7.500h8M3 10.500h5" stroke="#222" strokeWidth="2" strokeDasharray="2 1" />
              <circle cx="11.500" cy="11.500" r="3.500" fill="#b9b9b9" stroke="#222" /><path d="M11.500 9.500v2H13" fill="none" stroke="#222" />
            </Svg>
          </TabIcon>
          <PatientTab>
            <svg width="24" height="18" viewBox="0 0 24 18" aria-hidden="true">
              <path d="M1 18q0-6 7-7l4 2 4-2q7 1 7 7z" fill="#2a93ea" />
              <path d="M9 12l3 4 3-4z" fill="#fff" />
              <ellipse cx="12" cy="7" rx="5" ry="6" fill="url(#skin)" />
              <path d="M6 6.500Q6 0 12.500.2 19 1 17.500 7.500q-1-3-4.500-4-3 2.500-7 3z" fill="#4a3520" />
            </svg>
            <span>Doe JOHN °20420110</span>
          </PatientTab>
        </TabBar>
        <Body>
          <PatientTree />
          <Content>
            <ListHead />
            <Stripes />
            <ActionBar>
              <ButtonPair>
                <FlatButton aria-label="Ajouter" $strong $width={23}><Svg size={9} box={9}><path d="M0 4.500h9M4.500 0v9" stroke="#333" strokeWidth="2" /></Svg></FlatButton>
                <FlatButton aria-label="Retirer" disabled $width={22}><Svg size={9} box={9}><path d="M0 4.500h9" stroke="#aaa" strokeWidth="2" /></Svg></FlatButton>
              </ButtonPair>
              <FlatButton aria-label="Modifier" disabled $width={23}><Svg size={12} box={12}><path d="M0 12l1-4L8.500.5l3 3L4 11zM7 2l3 3" fill="#999" stroke="#f0f0f0" strokeWidth=".5" /></Svg></FlatButton>
              <FlatButton disabled $width={130}>Clôturer &amp; Renouv.</FlatButton>
              <FlatButton disabled $width={130}>Clôturer</FlatButton>
              <Spacer />
              <FlatButton disabled $width={130}>Refuser pdt.</FlatButton>
              <Select width={101} label="Motif" plain />
            </ActionBar>
          </Content>
        </Body>
        <ResizeDot />
        <EventDialog />
      </Window>
    </Page>
  );
}
